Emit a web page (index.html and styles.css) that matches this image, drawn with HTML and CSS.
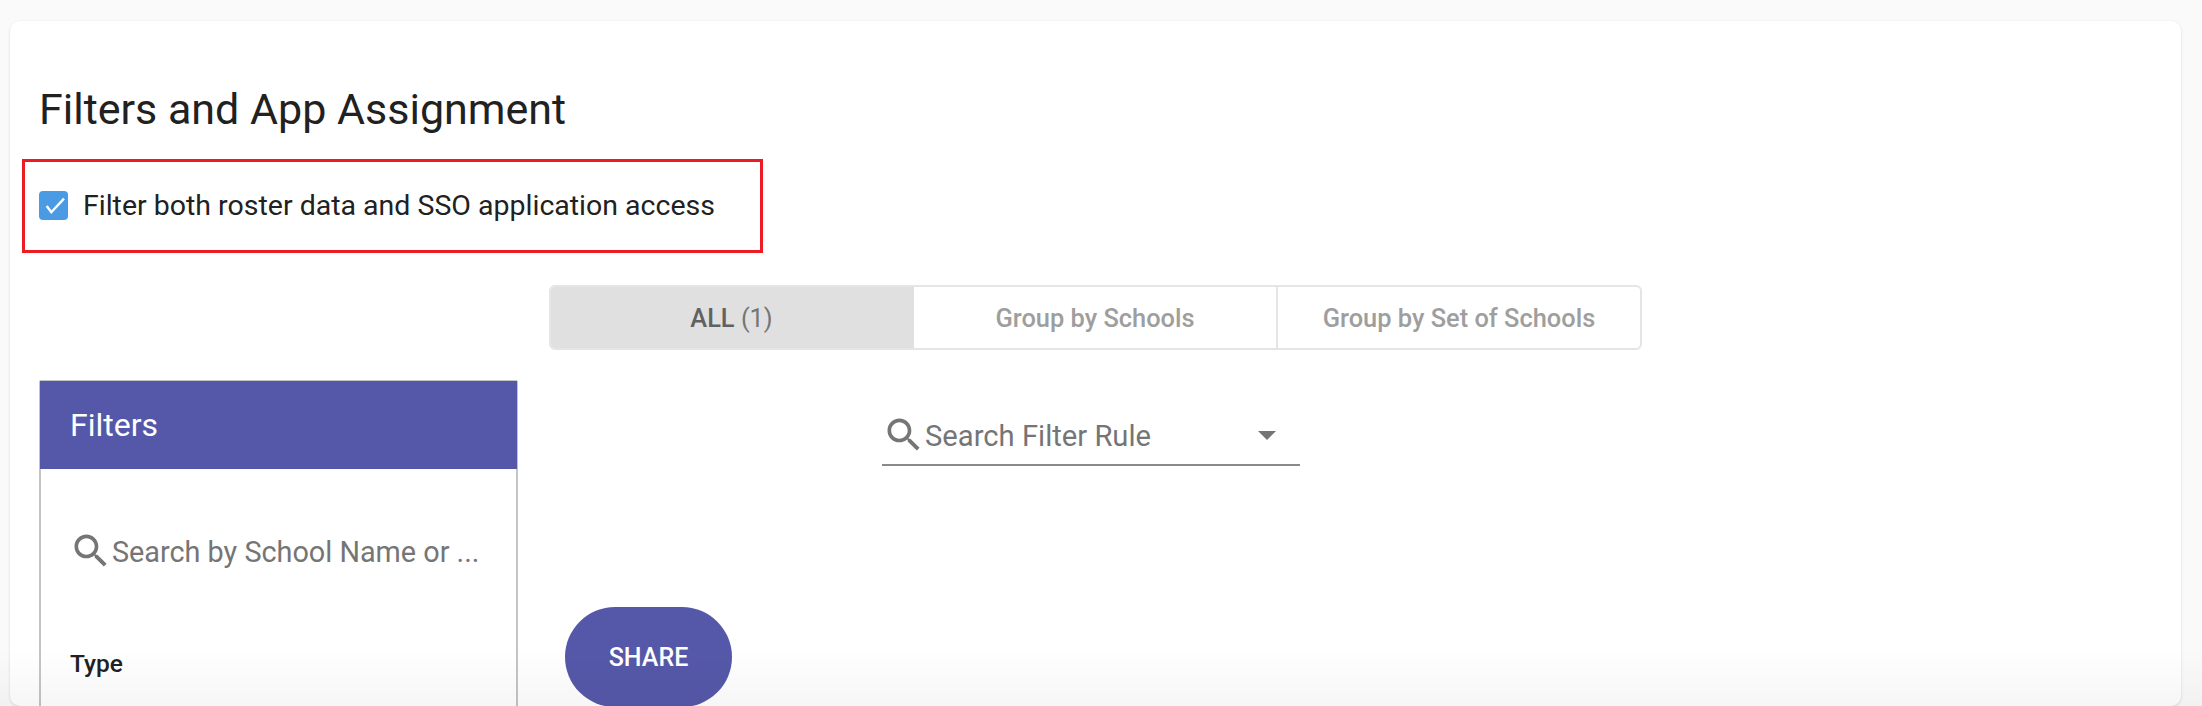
FILE: index.html
```html
<!DOCTYPE html>
<html lang="en">
<head>
<meta charset="utf-8">
<title>Filters and App Assignment</title>
<link rel="stylesheet" href="styles.css">
</head>
<body>
<main class="card">
  <h1 class="title">Filters and App Assignment</h1>
  <div class="check-row">
    <span class="checkbox">
      <svg viewBox="0 0 29 29" width="29" height="29"><path d="M7.7 15l4.6 6.2L25 7.6" fill="none" stroke="#fff" stroke-width="2.4"/></svg>
    </span>
    <span class="check-label">Filter both roster data and SSO application access</span>
    <span class="annotation"></span>
  </div>
  <div class="content">
    <aside class="panel">
      <div class="panel-head">Filters</div>
      <div class="panel-search">
        <svg class="icon-search" viewBox="0 0 24 24"><use href="#search"/></svg>
        <span class="placeholder">Search by School Name or ...</span>
      </div>
      <div class="panel-type">Type</div>
    </aside>
    <section class="main">
      <div class="tabs">
        <div class="tab tab-active">ALL&nbsp;<span class="count">(1)</span></div>
        <div class="tab">Group by Schools</div>
        <div class="tab">Group by Set of Schools</div>
      </div>
      <div class="rule-search">
        <svg class="icon-search" viewBox="0 0 24 24"><use href="#search"/></svg>
        <span class="placeholder">Search Filter Rule</span>
        <span class="caret"></span>
      </div>
      <button class="share" type="button">SHARE</button>
    </section>
  </div>
</main>
<div class="fade"></div>
<svg class="defs" width="0" height="0"><defs><path id="search" d="M15.5 14h-.79l-.28-.27C15.41 12.59 16 11.11 16 9.5 16 5.91 13.09 3 9.5 3S3 5.91 3 9.5 5.91 16 9.5 16c1.61 0 3.09-.59 4.23-1.57l.27.28v.79l5 4.99L20.49 19l-4.99-5zm-6 0C7.01 14 5 11.99 5 9.5S7.01 5 9.5 5 14 7.01 14 9.5 11.99 14 9.5 14z"/></defs></svg>
</body>
</html>
```
FILE: styles.css
```css
* { box-sizing: border-box; }
html, body { margin: 0; height: 706px; overflow: hidden; }
body {
  background: #fafafa;
  font-family: Roboto, "Liberation Sans", sans-serif;
  color: #212121;
  padding: 21px 21px 0 10px;
}
.card {
  background: #fff;
  border-radius: 10px;
  box-shadow: 0 1px 3px rgba(0,0,0,.14);
  height: 685px;
  padding: 64px 30px 0 29px;
  overflow: hidden;
}
.title {
  margin: 0;
  font-size: 43px;
  font-weight: 400;
  line-height: 48px;
  color: #212121;
}
.check-row {
  position: relative;
  display: flex;
  align-items: center;
  gap: 15px;
  margin-top: 52px;
  height: 40px;
}
.checkbox {
  width: 29px;
  height: 29px;
  background: #4a9be3;
  border-radius: 4px;
  display: block;
}
.checkbox svg { display: block; }
.check-label { font-size: 28.5px; color: #212121; }
.annotation {
  position: absolute;
  left: -17px;
  top: -26px;
  width: 741px;
  height: 94px;
  border: 3px solid #ed1c24;
}
.content {
  display: flex;
  align-items: flex-start;
  margin-top: 60px;
}
.panel {
  width: 479px;
  margin-top: 95px;
  border: 2px solid #c4c4c4;
  border-radius: 2px 2px 0 0;
  height: 340px;
  flex: none;
}
.panel-head {
  height: 88px;
  margin: -1px -1px 0;
  background: #5558a8;
  color: #fff;
  font-size: 32px;
  padding: 0 0 0 30px;
  display: flex;
  align-items: center;
}
.panel-search {
  display: flex;
  align-items: center;
  margin-top: 58px;
  padding-left: 28px;
  height: 48px;
}
.icon-search { width: 44px; height: 44px; flex: none; fill: #757575; }
.placeholder { font-size: 28.8px; color: #757575; white-space: nowrap; margin-top: 2px; }
.panel-search .placeholder { margin-left: -1px; }
.panel-type {
  margin: 74px 0 0 29px;
  font-size: 24.5px;
  font-weight: 500;
  color: #212121;
}
.main { margin-left: 31px; flex: none; width: 1093px; }
.tabs {
  display: flex;
  height: 65px;
  border: 2px solid #e5e5e5;
  border-radius: 6px;
  overflow: hidden;
}
.tab {
  flex: 1 1 0;
  display: flex;
  align-items: center;
  justify-content: center;
  font-size: 25.4px;
  font-weight: 500;
  color: #9e9e9e;
}
.tab + .tab { border-left: 2px solid #e5e5e5; }
.tab-active { flex: none; width: 365px; background: #e0e0e0; color: #616161; margin: -2px 0 -2px -2px; }
.tab-active + .tab { border-left: 0; }
.count { font-weight: 400; color: #757575; }
.rule-search {
  display: flex;
  align-items: center;
  width: 418px;
  height: 60px;
  margin: 56px 0 0 333px;
  border-bottom: 2px solid #8a8a8a;
}
.rule-search .icon-search { margin-right: -1px; }
.rule-search .placeholder { flex: 1; font-size: 29.2px; }
.caret {
  width: 0;
  height: 0;
  margin-right: 24px;
  border-left: 9px solid transparent;
  border-right: 9px solid transparent;
  border-top: 9px solid #757575;
}
.share {
  display: block;
  width: 167px;
  height: 100px;
  margin: 141px 0 0 16px;
  border: 0;
  border-radius: 50px;
  background: #5558a8;
  color: #fff;
  font: 500 25px Roboto, "Liberation Sans", sans-serif;
}
.fade {
  position: absolute;
  left: 0;
  right: 0;
  bottom: 0;
  height: 56px;
  background: linear-gradient(rgba(0,0,0,0), rgba(0,0,0,.035));
}
.defs { position: absolute; }
```
